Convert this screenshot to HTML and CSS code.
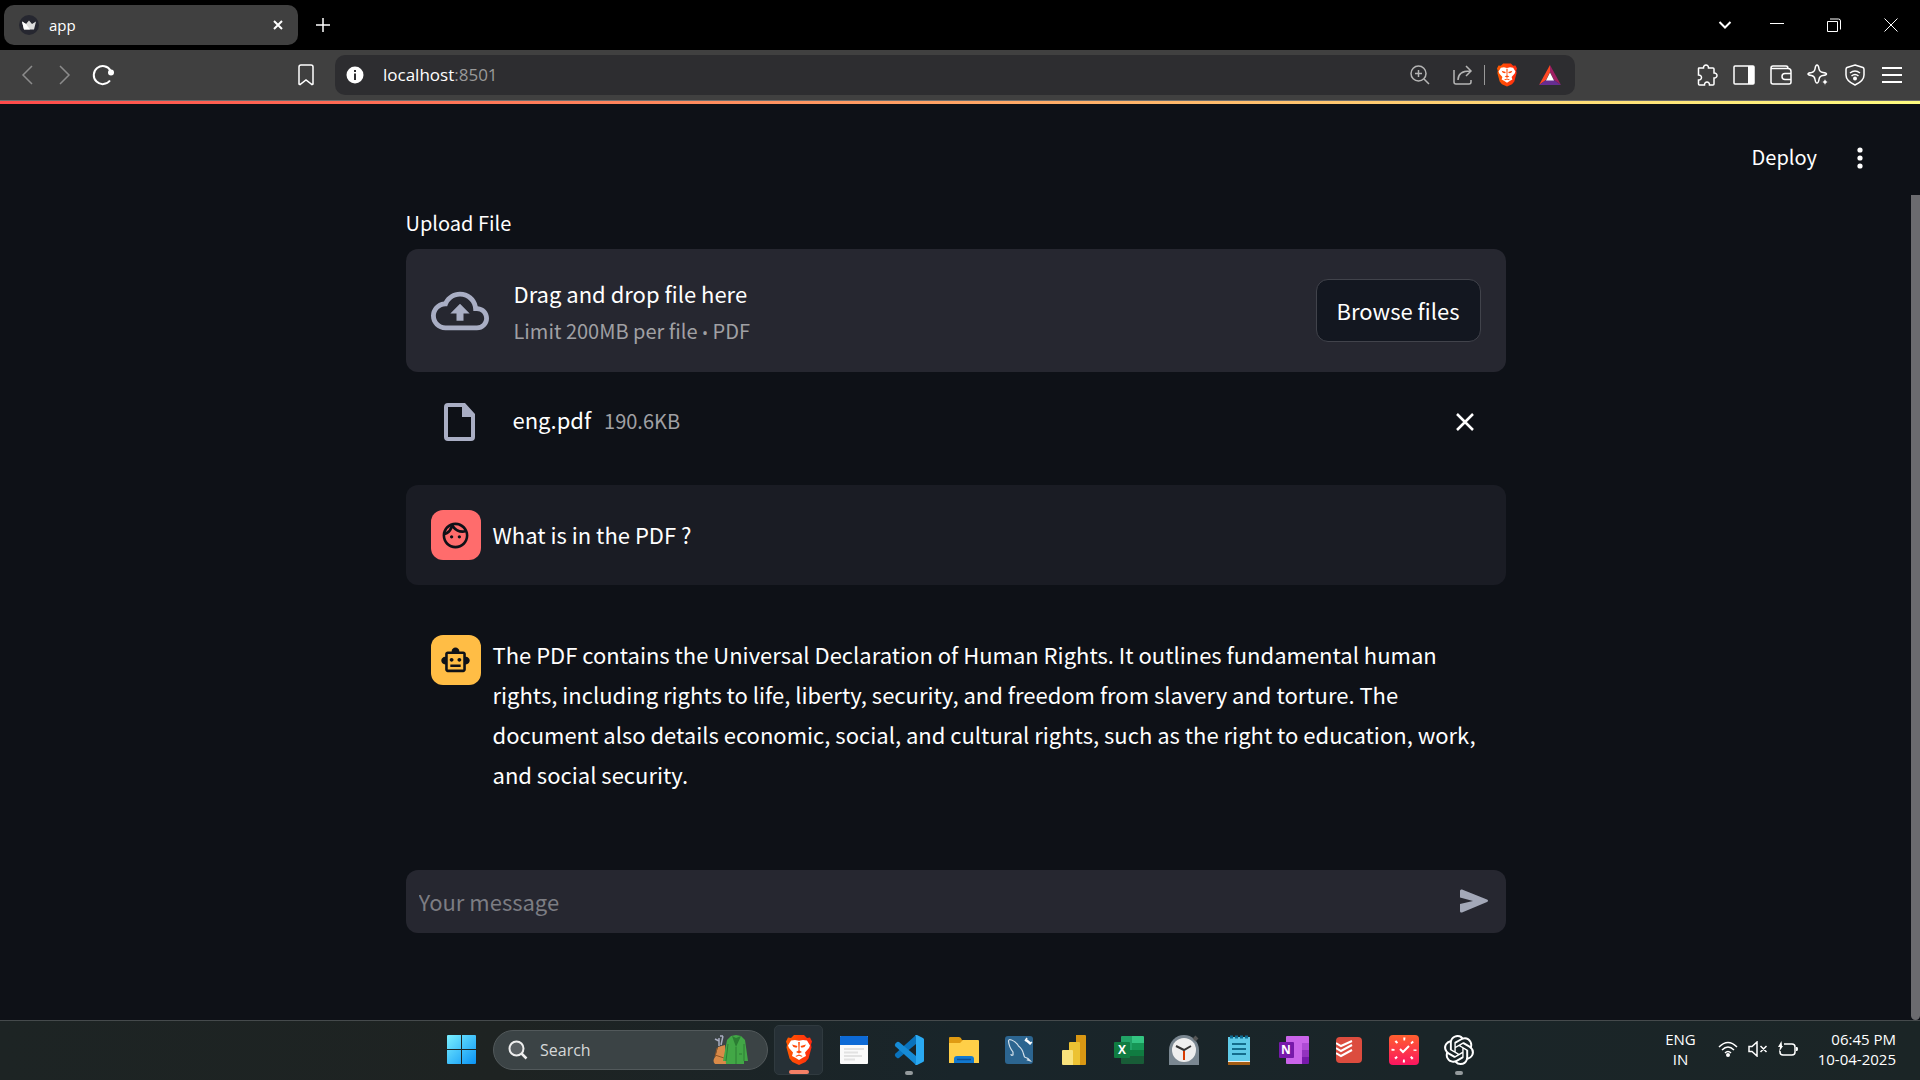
FILE: index.html
```html
<!DOCTYPE html>
<html lang="en">
<head>
<meta charset="utf-8">
<title>app</title>
<link rel="stylesheet" href="styles.css">
</head>
<body>
<svg class="defs" width="0" height="0" aria-hidden="true">
  <defs>
    <linearGradient id="g-brave" x1="0" x2="1"><stop offset="0" stop-color="#ff5a00"/><stop offset="1" stop-color="#ff2a10"/></linearGradient>
    <symbol id="brave" viewBox="0 0 26 30">
      <path fill="url(#g-brave)" d="M8 0h10l3 3 3-.5 2 4-1 3 .5 3-3 11-3 3.500L13 30l-6.500-3L3.500 23.500.5 12.500 1 9.500 0 6.500l2-4L5 3z"/>
      <path fill="#fff" d="M9 5l4 .8L17 5l4 .5 3 5-1 2.500-4 4.500 1 3.500-3 1.500-4 2.500-4-2.500-3-1.500 1-3.500L3 13l-1-2.500 3-5z"/>
      <path fill="#ff4a0a" d="M6 9.500l5.500 1.500-1 1.800-3-.8zM20 9.500L14.500 11l1 1.800 3-.8zM12.200 7h1.600l-.3 8.500 2.500 1.500-3 1.600-3-1.600 2.500-1.500zM9.500 21l3.500-1.500 3.500 1.500-.7.800-2.800-1-2.800 1z"/>
    </symbol>
  </defs>
</svg>

<div class="tabstrip">
  <div class="tab">
    <svg width="20" height="20" viewBox="0 0 20 20"><circle cx="10" cy="10" r="10" fill="#262730"/><path fill="#ddd" d="M3 6.500l4 2.500L10 5.500 13 9l4-2.500-2 8H5z"/><path fill="#fff" d="M3 6.500l4 2.500 4 5.500H5z"/></svg>
    <span class="tab-title">app</span>
    <button class="icon-btn" aria-label="Close tab"><svg width="10" height="10" viewBox="0 0 10 10"><path class="line w2" d="M1 1l8 8M9 1L1 9"/></svg></button>
  </div>
  <button class="icon-btn new-tab" aria-label="New tab"><svg width="14" height="14" viewBox="0 0 14 14"><path class="line" d="M7 0v14M0 7h14"/></svg></button>
  <div class="window-controls">
    <button class="icon-btn tab-search" aria-label="Search tabs"><svg width="14" height="10" viewBox="0 0 14 10"><path class="line w2" d="M1.500 2L7 7.500 12.500 2"/></svg></button>
    <button class="icon-btn" aria-label="Minimize"><svg width="14" height="14" viewBox="0 0 14 14"><path class="line w1" d="M0 5.500h14"/></svg></button>
    <button class="icon-btn" aria-label="Restore"><svg width="14" height="14" viewBox="0 0 14 14"><path class="line w1" d="M.5 3.500h10v10H.5zM3 1h8.500q2 0 2 2v8.500"/></svg></button>
    <button class="icon-btn" aria-label="Close"><svg width="14" height="14" viewBox="0 0 14 14"><path class="line w1" d="M.5.5l13 13M13.500.5l-13 13"/></svg></button>
  </div>
</div>

<div class="toolbar">
  <div class="nav-buttons">
    <button class="icon-btn dim" aria-label="Back"><svg width="12" height="20" viewBox="0 0 12 20"><path class="line" d="M11 1L2 10l9 9"/></svg></button>
    <button class="icon-btn dim" aria-label="Forward"><svg width="12" height="20" viewBox="0 0 12 20"><path class="line" d="M1 1l9 9-9 9"/></svg></button>
    <button class="icon-btn" aria-label="Reload"><svg width="22" height="22" viewBox="0 0 22 22"><path class="line w2" d="M18.500 6.500A9 9 0 1 0 18 16.500"/><circle cx="19" cy="8.500" r="3" fill="currentColor"/></svg></button>
  </div>
  <button class="icon-btn bookmark" aria-label="Bookmark"><svg width="16" height="22" viewBox="0 0 16 22"><path class="line" d="M3 1h10a2 2 0 0 1 2 2v17l-1 .5-6-4.500-6 4.500-1-.5V3a2 2 0 0 1 2-2z"/></svg></button>
  <div class="address">
    <svg width="18" height="18" viewBox="0 0 18 18"><circle cx="9" cy="9" r="8.500" fill="#fff"/><path fill="#2d2d30" d="M8 4h2v2H8zM8 7.500h2V14H8z"/></svg>
    <a class="url" href="#"><span class="host">localhost</span>:8501</a>
    <div class="address-actions">
      <button class="icon-btn soft" aria-label="Zoom"><svg width="20" height="20" viewBox="0 0 20 20"><circle class="line" cx="8.500" cy="8.500" r="7.500"/><path class="line" d="M14 14l5 5M8.500 5v7M5 8.500h7"/></svg></button>
      <button class="icon-btn soft share" aria-label="Share"><svg width="20" height="20" viewBox="0 0 20 20"><path class="line" d="M1 5v12q0 2 2 2h13q2 0 2-2v-2M5 15q0-9 12-9M13 1l5 5-5 5"/></svg></button>
      <span class="divider"></span>
      <button class="icon-btn" aria-label="Brave Shields"><svg width="20" height="24"><use href="#brave"/></svg></button>
      <button class="icon-btn" aria-label="Rewards"><svg width="22" height="20" viewBox="0 0 22 20"><path fill="#ff4724" d="M11 0v7L7 15l-7 5z"/><path fill="#9e1f63" d="M11 0l11 20-7-5-4-8z"/><path fill="#662d91" d="M0 20l7-5h8l7 5z"/><path fill="#fff" d="M11 7.500l4 8H7z"/></svg></button>
    </div>
  </div>
  <div class="extensions">
    <button class="icon-btn" aria-label="Extensions"><svg width="22" height="22" viewBox="0 0 22 22"><path class="line" d="M2.500 4.500Q2.500 4 3 4h4.500c-.2-4 5.200-4 5 0H17q1 0 1 1v4c4-.2 4 5.200 0 5v6q0 1-1 1h-3.500c.2-4-5.200-4-5 0H3.500q-1 0-1-1v-4c4 .2 4-5.200 0-5z"/></svg></button>
    <button class="icon-btn" aria-label="Sidebar"><svg width="22" height="20" viewBox="0 0 22 20"><rect class="line" x="1" y="1" width="20" height="18" rx="1"/><path fill="currentColor" d="M15 1h6v18h-6z"/></svg></button>
    <button class="icon-btn" aria-label="Wallet"><svg width="22" height="20" viewBox="0 0 22 20"><path class="line" d="M1 3.500h17q3 0 3 3V17q0 2-2 2H3q-2 0-2-2V3q0-2 2-2h13q2 0 2 2.500M21 8.500h-6q-3 0-3 3t3 3h6"/></svg></button>
    <button class="icon-btn" aria-label="Leo"><svg width="22" height="22" viewBox="0 0 22 22"><path class="line" d="M10 1q1.500 0 2 4 .5 3 4 3.500 3.500.5 3.500 1.500T16 11.500q-3.500.5-4 4-.5 3.500-2 3.500t-2-3.500q-.5-3.500-3.500-4Q1 11 1 10t3.500-1.500Q7.500 8 8 5q.5-4 2-4z"/><path stroke="#404040" stroke-width="1" fill="currentColor" d="M18 13.500l1.200 3.300 2.800 1.200-2.800 1.200L18 22.500l-1.200-3.300L14 18l2.800-1.200z"/></svg></button>
    <button class="icon-btn" aria-label="VPN"><svg width="20" height="22" viewBox="0 0 20 22"><path class="line" d="M10 1l8 2.500q1 .5 1 2V11q0 6-9 10-9-4-9-10V5.500q0-1.500 1-2zM5 9q5-4 10 0M6.500 12q3.500-3 7 0"/><circle cx="10" cy="14.500" r="2" fill="currentColor"/></svg></button>
    <button class="icon-btn" aria-label="Menu"><svg width="22" height="18" viewBox="0 0 22 18"><path class="line w2" d="M1 2h20M1 9h20M1 16h20"/></svg></button>
  </div>
</div>

<div class="page">
  <div class="decoration"></div>
  <div class="app">
    <div class="view">
      <header class="app-header">
        <button class="deploy">Deploy</button>
        <button class="icon-btn" aria-label="Main menu"><svg width="6" height="22" viewBox="0 0 6 22"><g fill="currentColor"><circle cx="3" cy="3" r="2.600"/><circle cx="3" cy="11" r="2.600"/><circle cx="3" cy="19" r="2.600"/></g></svg></button>
      </header>
      <main class="block">
        <p class="label">Upload File</p>
        <section class="dropzone">
          <svg class="cloud" width="58" height="58" viewBox="0 0 24 24"><path fill="currentColor" d="M19.350 10.040A7.490 7.490 0 0 0 12 4C9.110 4 6.600 5.640 5.350 8.040A5.994 5.994 0 0 0 0 14c0 3.310 2.690 6 6 6h13c2.760 0 5-2.240 5-5 0-2.640-2.050-4.780-4.650-4.960zM19 18H6c-2.210 0-4-1.790-4-4s1.790-4 4-4h.71C7.370 7.690 9.480 6 12 6c3.040 0 5.500 2.460 5.500 5.500v.5H19c1.660 0 3 1.340 3 3s-1.340 3-3 3zM8 13h2.550v3h2.900v-3H16l-4-4z"/></svg>
          <div class="drop-text">
            <span class="drop-title">Drag and drop file here</span>
            <small class="caption">Limit 200MB per file <span class="dot">•</span> PDF</small>
          </div>
          <button class="browse">Browse files</button>
        </section>
        <div class="file-row">
          <svg class="file-icon" width="32" height="38" viewBox="0 0 32 38"><path fill="currentColor" d="M4 0h17l10 11v23q0 4-4 4H4q-4 0-4-4V4q0-4 4-4zm0 4v30h23V14h-9V4z"/></svg>
          <div class="file-info">
            <span class="file-name">eng.pdf</span>
            <small class="caption">190.6KB</small>
          </div>
          <button class="icon-btn remove" aria-label="Remove file"><svg width="18" height="18" viewBox="0 0 18 18"><path class="line thick" d="M1 1l16 16M17 1L1 17"/></svg></button>
        </div>
        <article class="message user">
          <span class="avatar"><svg width="31" height="31" viewBox="0 0 24 24"><path fill="currentColor" d="M10.250 13c0 .69-.56 1.250-1.250 1.250S7.750 13.690 7.750 13s.56-1.250 1.250-1.250 1.250.56 1.250 1.250zM15 11.750c-.69 0-1.250.56-1.250 1.250s.56 1.250 1.250 1.250 1.250-.56 1.250-1.250-.56-1.250-1.250-1.250zm7 .25c0 5.520-4.480 10-10 10S2 17.520 2 12 6.480 2 12 2s10 4.480 10 10zM10.660 4.120C12.060 6.440 14.600 8 17.500 8c.46 0 .91-.05 1.340-.12C17.440 5.560 14.900 4 12 4c-.46 0-.91.05-1.340.12zM4.420 9.470a8.046 8.046 0 0 0 3.660-4.440 8.046 8.046 0 0 0-3.660 4.440zM20 12c0-.78-.12-1.530-.33-2.240-.7.15-1.420.24-2.170.24a10 10 0 0 1-7.760-3.690A10.016 10.016 0 0 1 4 11.860c.01.04 0 .09 0 .14 0 4.410 3.590 8 8 8s8-3.590 8-8z"/></svg></span>
          <p>What is in the PDF ?</p>
        </article>
        <article class="message bot">
          <span class="avatar"><svg width="31" height="31" viewBox="0 0 24 24"><path fill="currentColor" d="M20 9V7c0-1.100-.9-2-2-2h-3c0-1.660-1.340-3-3-3S9 3.340 9 5H6c-1.100 0-2 .9-2 2v2c-1.660 0-3 1.340-3 3s1.340 3 3 3v4c0 1.100.9 2 2 2h12c1.100 0 2-.9 2-2v-4c1.660 0 3-1.340 3-3s-1.340-3-3-3zm-2 10H6V7h12v12zm-9-6c-.83 0-1.500-.67-1.500-1.500S8.170 10 9 10s1.500.67 1.500 1.500S9.830 13 9 13zm7.500-1.500c0 .83-.67 1.500-1.500 1.500s-1.500-.67-1.500-1.500.67-1.500 1.500-1.500 1.500.67 1.500 1.500zM8 15h8v2H8v-2z"/></svg></span>
          <p>The PDF contains the Universal Declaration of Human Rights. It outlines fundamental human rights, including rights to life, liberty, security, and freedom from slavery and torture. The document also details economic, social, and cultural rights, such as the right to education, work, and social security.</p>
        </article>
        <form class="chat-input">
          <input type="text" placeholder="Your message" aria-label="Your message">
          <button class="icon-btn" type="button" aria-label="Send"><svg width="28" height="24" viewBox="0 0 28 24"><path fill="#a3a8b8" d="M0 2Q0 0 2 .6L27 10.500q2 1 0 2.500L2 23.400Q0 24 0 22v-7l13-3L0 8.500z"/></svg></button>
        </form>
      </main>
    </div>
    <div class="scrollbar"><div class="thumb"></div></div>
  </div>
</div>

<div class="taskbar">
  <div class="apps">
    <button class="task start" aria-label="Start"><svg width="30" height="30" viewBox="0 0 30 30"><defs><linearGradient id="g-win" x1="0" y1="0" x2="1" y2="1"><stop offset="0" stop-color="#7af0ff"/><stop offset="1" stop-color="#0a93f5"/></linearGradient></defs><path fill="url(#g-win)" d="M0 1q0-1 1-1h13v14H0zM15 0h13q1 0 1 1v13H15zM0 15h14v14H1q-1 0-1-1zM15 15h14v13q0 1-1 1H15z"/></svg></button>
    <label class="search">
      <svg width="20" height="20" viewBox="0 0 20 20"><circle cx="8.500" cy="8.500" r="7" fill="#5a6063" stroke="#eee" stroke-width="2"/><path d="M13.500 13.500l5 5" stroke="#eee" stroke-width="2.500"/></svg>
      <input type="text" placeholder="Search" aria-label="Search">
      <svg width="36" height="30" viewBox="0 0 36 30"><path fill="none" stroke="#a9adc0" stroke-width="1.500" d="M2 4l4 2M10 1l-2 9M6 3v8M10 1h-3"/><path fill="#d98a48" d="M5 12l7-2 1 19H2q-3-3 0-7z"/><path stroke="#8f5526" fill="none" d="M2 20l9 3M4 13l-2 9"/><path fill="#42a746" d="M18 1l5-1 5 1 4 4 3 21h-4v3H13v-3h-3l4-21z"/><path fill="#2b7d33" d="M19 1l4 11 5-11-5 2z"/><path fill="none" stroke="#2c7d34" d="M23 12v17M15 9l-2 17M31 9v17M26 19h3"/></svg>
    </label>
    <button class="task active" aria-label="Brave"><svg width="26" height="30"><use href="#brave"/></svg><i class="mark"></i></button>
    <button class="task" aria-label="Calendar"><svg width="28" height="28" viewBox="0 0 28 28"><rect width="28" height="28" rx="1" fill="#fafafa"/><path fill="#0d6ad6" d="M0 1q0-1 1-1h26q1 0 1 1v8H0z"/><path stroke="#e2e2e2" stroke-width="2" d="M4 13h20M4 16.500h14M4 20h18M4 23.500h11"/></svg></button>
    <button class="task running" aria-label="Visual Studio Code"><svg width="30" height="30" viewBox="0 0 30 30"><path fill="#0a73bd" d="M22 0L1.500 18.500q-1.500 1.500 0 3l1.500 1.500q1 .7 2 0L22 9z"/><path fill="#168bd6" d="M22 30L1.500 11.500q-1.500-1.500 0-3L3 7q1-.7 2 0l17 14z"/><path fill="#2aa9f2" d="M21 0q1-.5 2 0l6 3q1 .5 1 1.500v21q0 1-1 1.500l-6 3q-1 .5-2 0 1-.5 1-2V2q0-1.500-1-2z"/></svg><i class="mark"></i></button>
    <button class="task" aria-label="File Explorer"><svg width="30" height="28" viewBox="0 0 30 28"><path fill="#e09b12" d="M0 2q0-1 1-1h9q2 0 3 3h16v8H0z"/><path fill="#ffcf48" d="M0 7h11l3-3h15q1 0 1 1v22H0z"/><path fill="#1279d0" d="M5 23q0-3 3-3h14q3 0 3 3v4H5z"/><path stroke="#0a4d94" stroke-width="1.500" d="M8 23.500h14"/></svg></button>
    <button class="task" aria-label="MySQL Workbench"><svg width="28" height="28" viewBox="0 0 28 28"><rect width="28" height="28" rx="3" fill="#2c6590"/><path fill="none" stroke="#d3e0ea" stroke-width="1.200" d="M6 18q0 2 2 1v-3Q4 11 3.500 5q0-2 3-1 5 2 7 6 4 3 5 8l1 3q4 1 6 4l-3-1 1-1"/><path stroke="#fff" stroke-width="2.500" d="M21 4l5 4"/><path stroke="#fff" stroke-width="1.500" fill="none" d="M20 5l2-3M24 8l3-2"/></svg></button>
    <button class="task" aria-label="Power BI"><svg width="24" height="30" viewBox="0 0 24 30"><path fill="#d99713" d="M14 0h9q1 0 1 1v28q0 1-1 1h-9z"/><path fill="#ecc233" d="M7 8q0-1 1-1h9q1 0 1 1v22H7z"/><path fill="#f8e27c" d="M0 16q0-1 1-1h9q1 0 1 1v14H1q-1 0-1-1z"/></svg></button>
    <button class="task" aria-label="Excel"><svg width="30" height="28" viewBox="0 0 30 28"><path fill="#21a366" d="M7 1q0-1 1-1h10v14H7z"/><path fill="#33c481" d="M18 0h11q1 0 1 1v6H18z"/><path fill="#169655" d="M18 7h12v7H18z"/><path fill="#107c41" d="M7 14h23v6H7z"/><path fill="#185c37" d="M7 20h23v7q0 1-1 1H8q-1 0-1-1z"/><rect y="6" width="16" height="16" rx="1" fill="#107c41"/><text class="glyph" x="8" y="18">X</text></svg></button>
    <button class="task" aria-label="Clock"><svg width="30" height="30" viewBox="0 0 30 30"><path fill="#7a8791" d="M0 15a15 15 0 0 1 30 0v15H0z"/><path stroke="#555" stroke-width="4" d="M25 2l3 3"/><circle cx="15" cy="15" r="12" fill="#eee"/><path fill="none" stroke="#333" stroke-width="2" d="M7 11l8 4 7-4"/><path stroke="#d83b01" stroke-width="2" d="M15 16v9"/></svg></button>
    <button class="task" aria-label="Notepad"><svg width="22" height="30" viewBox="0 0 22 30"><path fill="#a35c13" d="M0 26h22v4H0z"/><path fill="#eee" d="M0 25h22v2H0z"/><path fill="#5fcbe8" d="M0 2h22v24H0z"/><path stroke="#0f6d93" stroke-width="3" stroke-dasharray="3 2" d="M2 2h19"/><path stroke="#146d8c" stroke-width="2" d="M4 9h14M4 14h14M4 19h14"/></svg></button>
    <button class="task" aria-label="OneNote"><svg width="30" height="28" viewBox="0 0 30 28"><path fill="#ca64ea" d="M7 1q0-1 1-1h21q1 0 1 1v6h-7v21H8q-1 0-1-1z"/><path fill="#ae4bd5" d="M23 7h7v7h-7z"/><path fill="#9332bf" d="M23 14h7v7h-7z"/><path fill="#7719aa" d="M23 21h7v6q0 1-1 1h-6z"/><rect y="6" width="15" height="16" rx="1" fill="#7719aa"/><text class="glyph" x="7" y="18">N</text></svg></button>
    <button class="task" aria-label="Todoist"><svg width="26" height="26" viewBox="0 0 26 26"><rect width="26" height="26" rx="4" fill="#dc4c3e"/><path fill="none" stroke="#fff" stroke-width="2" d="M0 6l5 3L16 4M0 11l5 3 11-6M0 16l5 3 11-6"/></svg></button>
    <button class="task" aria-label="Focus timer"><svg width="30" height="30" viewBox="0 0 30 30"><defs><linearGradient id="g-t" x2="0" y2="1"><stop offset="0" stop-color="#ff5f2e"/><stop offset="1" stop-color="#fb1560"/></linearGradient></defs><rect width="30" height="30" rx="4" fill="url(#g-t)"/><circle cx="15" cy="15" r="11" fill="none" stroke="#fff" stroke-width="3" stroke-dasharray="2 6.640" stroke-dashoffset="1"/><path fill="none" stroke="#fff" stroke-width="2" d="M11 14l3 3 6-6"/></svg></button>
    <button class="task running" aria-label="ChatGPT"><svg width="30" height="30" viewBox="0 0 24 24"><path fill="#fff" d="M22.2819 9.8211a5.9847 5.9847 0 0 0-.5157-4.9108 6.0462 6.0462 0 0 0-6.5098-2.9A6.0651 6.0651 0 0 0 4.9807 4.1818a5.9847 5.9847 0 0 0-3.9977 2.9 6.0462 6.0462 0 0 0 .7427 7.0966 5.98 5.98 0 0 0 .511 4.9107 6.051 6.051 0 0 0 6.5146 2.9001A5.9847 5.9847 0 0 0 13.2599 24a6.0557 6.0557 0 0 0 5.7718-4.2058 5.9894 5.9894 0 0 0 3.9977-2.9001 6.0557 6.0557 0 0 0-.7475-7.0729zm-9.022 12.6081a4.4755 4.4755 0 0 1-2.8764-1.0408l.1419-.0804 4.7783-2.7582a.7948.7948 0 0 0 .3927-.6813v-6.7369l2.02 1.1686a.071.071 0 0 1 .038.052v5.5826a4.504 4.504 0 0 1-4.4945 4.4944zm-9.6607-4.1254a4.4708 4.4708 0 0 1-.5346-3.0137l.142.0852 4.783 2.7582a.7712.7712 0 0 0 .7806 0l5.8428-3.3685v2.3324a.0804.0804 0 0 1-.0332.0615L9.74 19.9502a4.4992 4.4992 0 0 1-6.1408-1.6464zM2.3408 7.8956a4.485 4.485 0 0 1 2.3655-1.9728V11.6a.7664.7664 0 0 0 .3879.6765l5.8144 3.3543-2.0201 1.1685a.0757.0757 0 0 1-.071 0l-4.8303-2.7865A4.504 4.504 0 0 1 2.3408 7.872zm16.5963 3.8558L13.1038 8.364 15.1192 7.2a.0757.0757 0 0 1 .071 0l4.8303 2.7913a4.4944 4.4944 0 0 1-.6765 8.1042v-5.6772a.79.79 0 0 0-.407-.667zm2.0107-3.0231l-.142-.0852-4.7735-2.7818a.7759.7759 0 0 0-.7854 0L9.409 9.2297V6.8974a.0662.0662 0 0 1 .0284-.0615l4.8303-2.7866a4.4992 4.4992 0 0 1 6.6802 4.66zM8.3065 12.863l-2.02-1.1638a.0804.0804 0 0 1-.038-.0567V6.0742a4.4992 4.4992 0 0 1 7.3757-3.4537l-.142.0805L8.704 5.459a.7948.7948 0 0 0-.3927.6813zm1.0976-2.3654l2.602-1.4998 2.6069 1.4998v2.9994l-2.5974 1.4997-2.6067-1.4997Z"/></svg><i class="mark"></i></button>
  </div>
  <div class="tray">
    <span class="lang">ENG<br>IN</span>
    <span class="status">
      <svg width="20" height="16" viewBox="0 0 20 16"><path class="line" d="M1 6q9-9 18 0M4 9q6-6 12 0M7 12q3-3 6 0"/><circle cx="10" cy="14" r="2" fill="currentColor"/></svg>
      <svg width="20" height="16" viewBox="0 0 20 16"><path class="line" d="M1 5.500h3L9 1v14l-5-4.500H1zM12.500 5l6 6M18.500 5l-6 6"/></svg>
      <svg width="20" height="16" viewBox="0 0 20 16"><path class="line" d="M6 3h8q3 0 3 3v5q0 3-3 3H5q-3 0-3-3v-1"/><path fill="currentColor" d="M18 6h1q1 0 1 2t-1 2h-1zM3.500 0L0 6h2l-1 5 4-6H4z"/></svg>
    </span>
    <span class="clock">06:45 PM<br>10-04-2025</span>
  </div>
</div>
</body>
</html>
```
FILE: styles.css
```css
* { box-sizing: border-box; }

body {
  margin: 0;
  min-height: 100vh;
  display: flex;
  flex-direction: column;
  background: #0e1117;
  color: #fff;
  font: 16px/20px "Open Sans", "Noto Sans", sans-serif;
}

p { margin: 0; }
svg { display: block; flex: none; }
button { border: 0; padding: 0; background: none; color: inherit; font: inherit; }
input { border: 0; padding: 0; background: none; color: inherit; font: inherit; min-width: 0; outline: 0; }
.defs { position: absolute; }

.line { fill: none; stroke: currentColor; stroke-width: 1.5; }
.w1 { stroke-width: 1; }
.w2 { stroke-width: 2; }
.thick { stroke-width: 2.5; }
.icon-btn { display: flex; align-items: center; justify-content: center; flex: none; }
.dim { color: #8c8c8c; }
.soft { color: #b5b5b5; }

/* Browser tabs */
.tabstrip { display: flex; align-items: center; height: 50px; padding-left: 4px; background: #000; }
.tab {
  display: flex; align-items: center; gap: 10px;
  width: 294px; height: 40px; padding: 0 15px;
  border-radius: 10px; background: #404040;
}
.tab-title { flex: 1; font-size: 15px; }
.new-tab { width: 50px; height: 40px; }
.window-controls { display: flex; margin-left: auto; padding-right: 1px; }
.window-controls .icon-btn { width: 57px; height: 40px; }
.window-controls .tab-search { width: 46px; }

/* Browser toolbar */
.toolbar { display: flex; align-items: center; height: 51px; background: #404040; border-bottom: 1px solid #6e6e6e; }
.nav-buttons { display: flex; padding-left: 8px; }
.nav-buttons .icon-btn { width: 38px; }
.bookmark { width: 58px; margin-left: 155px; }
.address {
  display: flex; align-items: center; flex: 1; max-width: 1240px;
  height: 40px; padding: 0 10px 0 11px;
  border-radius: 10px; background: #2d2d30;
}
.url { margin-left: 19px; color: #999; font-size: 17px; text-decoration: none; }
.host { color: #fff; }
.address-actions { display: flex; align-items: center; margin-left: auto; gap: 12px; }
.address-actions .icon-btn { width: 31px; }
.divider { width: 1px; height: 20px; margin: 0 -6px; background: #999; }
.extensions { display: flex; margin-left: auto; padding-right: 10px; }
.extensions .icon-btn { width: 37px; }

/* App page */
.page { flex: 1; display: flex; flex-direction: column; font-family: "Noto Sans CJK SC", "Noto Sans", sans-serif; }
.decoration { height: 3px; background: linear-gradient(90deg, #ff4b4b, #fffd80); }
.app { flex: 1; display: flex; }
.view { flex: 1; display: flex; flex-direction: column; }
.app-header { display: flex; align-items: center; justify-content: flex-end; gap: 40px; height: 91px; padding: 16px 48px 0 0; }
.deploy { font-size: 20px; line-height: 30px; padding-bottom: 1px; }
.scrollbar { width: 9px; padding-top: 91px; display: flex; }
.thumb { flex: 1; background: #6b6b6f; border-radius: 0 0 5px 5px; }

.block { flex: 1; display: flex; flex-direction: column; width: 100%; max-width: 1100px; margin: 0 auto; padding: 12px 0 87px; }
.label { font-size: 20px; line-height: 32px; }
.caption { font-size: 20px; line-height: 36px; color: #a0a0a4; }
.dot { font-family: "Open Sans", sans-serif; font-size: 16px; line-height: 20px; }
.dropzone {
  display: flex; align-items: center; gap: 25px;
  height: 123px; margin-top: 10px; padding: 0 25px;
  border-radius: 12px; background: #262730;
}
.cloud, .file-icon { color: #a9aec4; }
.drop-text { flex: 1; display: flex; flex-direction: column; font-size: 22px; line-height: 40px; }
.browse {
  height: 63px; padding: 0 20px 2px;
  border: 1px solid #41434b; border-radius: 12px; background: #131720;
  font-size: 22px;
}
.file-row { display: flex; align-items: center; height: 100px; padding: 0 32px 0 38px; font-size: 22px; }
.file-info { display: flex; align-items: baseline; gap: 13px; margin-left: 37px; padding-bottom: 4px; line-height: 36px; }
.remove { margin-left: auto; }

.message { display: flex; gap: 12px; padding: 25px; border-radius: 12px; font-size: 22px; line-height: 40px; }
.message p { flex: 1; padding-top: 4px; margin-right: -14px; }
.user { margin-top: 13px; background: #1a1c24; }
.bot { margin-top: 25px; }
.message.bot p { padding-top: 0; margin-top: -1px; }
.avatar { display: flex; align-items: center; justify-content: center; flex: none; width: 50px; height: 50px; border-radius: 12px; color: #0e1117; }
.user .avatar { background: #ff6c6c; }
.bot .avatar { background: #ffbd45; }

.chat-input { display: flex; align-items: center; height: 63px; margin-top: auto; padding: 0 18px 2px 13px; border-radius: 12px; background: #262730; }
.chat-input input { flex: 1; font-size: 22px; height: 40px; }
.chat-input input::placeholder { color: #7c7d83; opacity: 1; }

/* Windows taskbar */
.taskbar {
  display: grid; grid-template-columns: 1fr auto 1fr; align-items: center;
  height: 60px; border-top: 1px solid #454a4c;
  background: linear-gradient(90deg, #1d2424, #1e2322 26%, #19252a 50%, #1b2526);
}
.apps { grid-column: 2; display: flex; align-items: center; padding-bottom: 1px; }
.task { position: relative; display: flex; align-items: center; justify-content: center; width: 55px; height: 58px; }
.search {
  display: flex; align-items: center; gap: 12px;
  width: 275px; height: 40px; margin: 0 3px 0 4px; padding: 0 18px 0 14px;
  border: 1px solid #52595b; border-radius: 20px; background: #3b4345;
}
.search input { flex: 1; font-size: 16px; }
.search input::placeholder { color: #d5d8d9; opacity: 1; }
.active { width: 49px; height: 50px; margin: 0 3px; border: 1px solid #303a3f; border-radius: 5px; background: #263036; }
.mark { position: absolute; bottom: 0; left: 50%; width: 8px; height: 4px; margin-left: -4px; border-radius: 2px; background: #949a9c; }
.running .mark { bottom: 4px; }
.active .mark { width: 20px; margin-left: -10px; background: #f58066; }
.glyph { fill: #fff; font: bold 12px "Open Sans", sans-serif; text-anchor: middle; }
.tray { grid-column: 3; justify-self: end; display: flex; align-items: center; padding: 0 24px 4px 0; font-size: 15px; }
.lang { text-align: center; margin-right: 22px; }
.status { display: flex; align-items: center; gap: 10px; margin-right: 20px; }
.clock { text-align: right; }
```
